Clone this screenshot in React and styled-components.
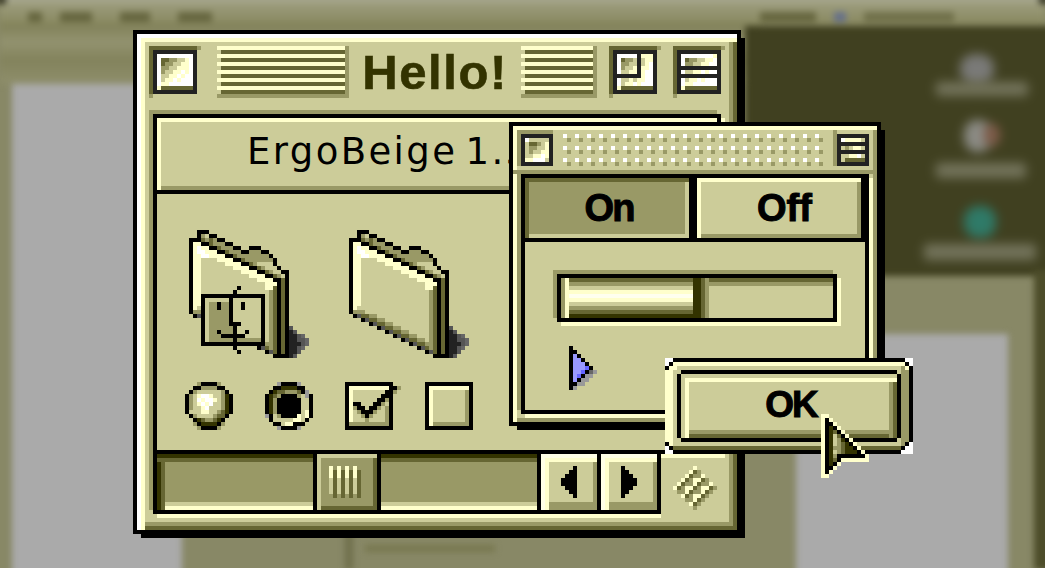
import React from 'react'
import styled, { createGlobalStyle } from 'styled-components'

const beige = '#cccc99'
const cream = '#ffffcc'
const mid = '#999966'
const dark = '#666633'
const deep = '#333300'

const colors = {
  k: '#000000', C: '#222222', K: '#222222', G: '#555555', H: '#666666', g: '#999999',
  w: '#ffffff', c: cream, b: beige, m: mid, d: dark, D: deep, p: '#9999ff', P: '#6666ff',
}

const GlobalStyle = createGlobalStyle`
    html, body {
        margin: 0;
        width: 1045px;
        height: 568px;
        overflow: hidden;
        background: #888866;
    }
`

const PixelSvg = styled.svg`
    display: block;
    flex-shrink: 0;
`

// draws rows of palette letters as 4px blocks, '.' is see through
const Pixels = ({ rows }) => {
  const w = Math.max(...rows.map(r => r.length))
  const rects = []
  rows.forEach((row, y) => {
    let x = 0
    while (x < row.length) {
      let end = x
      while (end < row.length && row[end] === row[x]) end++
      if (row[x] !== '.') {
        rects.push(<rect key={y + '-' + x} x={x} y={y} width={end - x} height={1} fill={colors[row[x]]} />)
      }
      x = end
    }
  })
  return (
    <PixelSvg width={w * 4} height={rows.length * 4} viewBox={`0 0 ${w} ${rows.length}`} shapeRendering="crispEdges">
      {rects}
    </PixelSvg>
  )
}

const makeFolder = (withFace) => {
  const g = Array.from({ length: 32 }, () => Array(30).fill('.'))
  const put = (r, from, to, ch) => { for (let i = from; i <= to; i++) g[r][i] = ch }

  put(0, 2, 4, 'k')
  put(1, 2, 2, 'k'); put(1, 3, 3, 'm'); put(1, 4, 4, 'b'); put(1, 5, 6, 'k')
  put(2, 0, 2, 'k'); put(2, 3, 3, 'd'); put(2, 4, 4, 'm'); put(2, 5, 5, 'd'); put(2, 6, 6, 'm'); put(2, 7, 8, 'k')

  // top slope: cream band, black line, then the back of the folder
  const ends = { 3: 10, 4: 12, 5: 19, 6: 20, 7: 21, 8: 21, 9: 22, 10: 24, 11: 24, 12: 24 }
  for (let r = 3; r <= 12; r++) {
    const ks = 3 + 2 * (r - 3)
    put(r, 0, 0, 'k')
    put(r, 1, ks - 1, 'b')
    put(r, 1, 2, 'c')
    put(r, Math.max(1, ks - 4), ks - 1, 'c')
    put(r, ks, ks + 1, 'k')
    put(r, ks + 2, ks + 2, 'd')
    put(r, ks + 3, ks + 3, 'm')
    const end = ends[r]
    if (ks + 4 < end) put(r, ks + 4, end - 1, r > 7 ? 'b' : 'm')
    if (r === 10) put(r, 23, 24, 'k')
    else put(r, end, end, 'k')
  }
  put(3, 9, 10, 'k'); put(4, 11, 12, 'k'); put(4, 13, 14, '.'); put(4, 15, 17, 'k')
  put(5, 13, 14, 'k'); put(5, 15, 17, 'm'); put(5, 18, 19, 'k')
  put(6, 20, 20, 'k'); put(7, 21, 21, 'k')
  put(4, 2, 2, 'w'); put(5, 2, 3, 'w'); put(6, 3, 4, 'w')
  put(12, 23, 23, 'd'); put(12, 21, 22, 'k')

  for (let r = 13; r <= 20; r++) {
    put(r, 0, 0, 'k')
    put(r, 1, 19, 'b')
    put(r, 1, r < 19 ? 2 : 1, 'c')
  }
  put(13, 19, 21, 'c')
  put(14, 19, 20, 'c')
  put(20, 1, 3, 'm')
  for (let r = 21; r <= 31; r++) {
    const s = 1 + 2 * (r - 21)
    put(r, s + 2, 19, 'b')
    put(r, s + 4, s + 5, 'm')
    put(r, s + 2, s + 3, 'd')
    put(r, s, s, 'k')
    put(r, s + 1, s + 1, 'G')
  }
  for (let r = 13; r <= 30; r++) {
    if (r > 14 && r !== 30) put(r, 20, 20, 'm')
    if (r > 13) put(r, 21, 21, 'd')
    put(r, 22, 22, 'k'); put(r, 23, 23, 'd'); put(r, 24, 24, 'k')
  }
  put(31, 21, 24, 'k')

  const shadow = { 24: 'G', 25: 'KG', 26: 'KKGH', 27: 'KKGGH', 28: 'KKKGH', 29: 'KKGH', 30: 'KKG', 31: 'KG' }
  Object.keys(shadow).forEach(r => {
    shadow[r].split('').forEach((ch, i) => put(+r, 25 + i, 25 + i, ch))
  })

  if (withFace) {
    for (let r = 17; r <= 27; r++) {
      put(r, 4, 17, 'b')
      if (r > 17) put(r, 5, 10, 'm')
    }
    put(27, 5, 17, 'm')
    put(16, 3, 18, 'k'); put(28, 3, 18, 'k')
    for (let r = 16; r <= 28; r++) { put(r, 3, 3, 'k'); put(r, 18, 18, 'k') }
    put(18, 7, 7, 'k'); put(19, 7, 7, 'k'); put(18, 13, 13, 'k'); put(19, 13, 13, 'k')
    for (let r = 17; r <= 22; r++) put(r, 10, 10, 'k')
    put(23, 10, 12, 'k')
    for (let r = 24; r <= 27; r++) put(r, 11, 11, 'k')
    put(25, 7, 7, 'k'); put(26, 8, 13, 'k'); put(25, 14, 14, 'k')
    put(14, 12, 12, 'k'); put(15, 11, 11, 'k')
    put(29, 11, 11, 'k'); put(30, 12, 12, 'k')
  }
  return g.map(r => r.join(''))
}

const closeBox = [
  'ddddddddddddm', 'dCCCCCCCCCCC.',
  'dCwwwwwwwwwC.', 'dCwddmmbbcwC.', 'dCwdmmbbccwC.', 'dCwmmbbcccwC.', 'dCwmbbccwcwC.',
  'dCwbbccwcwwC.', 'dCwbccwcwwwC.', 'dCwccwwwwwwC.', 'dCcddddddddC.',
  'dCCCCCCCCCCC.', 'm............',
]
const zoomBox = [
  'ddddddddddddm', 'dCCCCCCCCCCC.',
  'dCwwwwwCcccC.', 'dCwdmmbCbccC.', 'dCwmmbbCbcwC.', 'dCwmbbcCccwC.', 'dCwbbccCcwwC.',
  'dCCCCCCCcwwC.', 'dCwbbcbccwwC.', 'dCwbccwcwwwC.', 'dCcddddddddC.',
  'dCCCCCCCCCCC.', 'm............',
]
const menuBox = [
  'ddddddddddddm', 'dCCCCCCCCCCC.',
  'dCwwwwwwwwcC.', 'dCwdmmbbccwC.', 'dCwmmbbccwwC.', 'dCCCCCCCCCCC.', 'dCwbbccwcwwC.',
  'dCCCCCCCCCCC.', 'dCwbccwcwwwC.', 'dCwccwwwwwwC.', 'dCcddddddddC.',
  'dCCCCCCCCCCC.', 'm............',
]
const smallClose = [
  'mmmmmmmmm', 'mCCCCCCCC', 'mCwbbbbbC', 'mCbddmbcC', 'mCbmmbbcC', 'mCbmbbccC', 'mCbbccwcC', 'mCccwwwbC', 'mCCCCCCCC',
]
const smallMenu = [
  'm........', 'mCCCCCCCC', 'mCwccccbC', 'mCCCCCCCC', 'mCbmbccbC', 'mCCCCCCCC', 'mCbbccwbC', 'mCbdddddC', 'mCCCCCCCC',
]
const dots = ['w..', '.m.', '...', 'w..', '.m.', '...', 'w..', '.m.'].map(s => s.repeat(22).slice(0, 65))

const radioOff = [
  '...mkkkkm...', '..kkmmmmkk..', '.kmbbbbbbmk.', 'kmbcwwcbbmDk',
  'kmbwcwwcbmDk', 'kmbcwcwbbmDk', 'kmbbcwbbbmDk', 'kbbbccbbmdDk',
  '.kmbbbbmddk.', '..kDdmmdDk..', '..mkDDDDkm..', '...mkkkkm...',
]
const radioOn = [
  '...gkkkkg...', '..kkDDDDkk..', '.kDddmmmdkg.', 'kDdmkkkkmbgk',
  'kDmkkkkkkbbk', 'kDmkkkkkkbbk', 'kDmkkkkkkbbk', 'kDmkkkkkkbck',
  'gkbmkkkkcbck', '.kbbbbbccbk.', '..kkbcckkk..', '...gkkkkg...',
]
const checked = [
  'kkkkkkkkkkkk..', 'kcccccccccckkm', 'kcbbbbbbbbkkm.', 'kcbbbbbbbkkk..',
  'kcbbbbbbkkmk..', 'kckkbbbkkmbk..', 'kcmkkbkkmbmk..', 'kcbmkkkmbbmk..',
  'kcbbmkmbbbmk..', 'kcbbbmbbbbmk..', 'kmmmmmmmmmmk..', 'kkkkkkkkkkkk..',
]
const thumbGrip = ['c.c.c.c.', 'cdcdcdcd', 'cdcdcdcd', 'bdbdbdbd', 'bdbdbdbd', 'bdbdbdbd', 'bdbdbdbd', '.d.d.d.d']
const arrowLeft = ['...k', '..kk', '.kkk', 'kkkk', 'kkkk', '.kkk', '..kk', '...k']
const arrowRight = ['k...', 'kk..', 'kkk.', 'kkkk', 'kkkk', 'kkk.', 'kk..', 'k...']
const playArrow = [
  'k......', 'kk.....', 'kpk....', 'kppk...', 'kpppk..', 'kpppPk.',
  'kppPkHg', 'kpPkgg.', 'kpkgg..', 'kkgg...', 'kg.....',
]
const cursor = [
  'cc..........', 'ckc.........', 'ckkc........', 'ckDkc.......',
  'ckDdkc......', 'ckDbdkc.....', 'ckDbmDkc....', 'ckDbmdDkc...',
  'ckDmmdDDkc..', 'ckDbmdDDDkc.', 'ckDmkkkkkkkc', 'ckDdkccccccc',
  'ckDkc.......', 'ckkc........', 'ckc.........', 'cc..........',
]
const grip = Array.from({ length: 11 }, (_, y) => {
  let s = ''
  for (let x = 0; x < 11; x++) {
    const inside = Math.abs(x - 5) + Math.abs(y - 5) <= 5
    if (!inside) s += '.'
    else if ((x + y) % 4 < 2) s += (x - y + 20) % 4 === 0 ? 'm' : 'c'
    else s += (x - y + 20) % 2 === 0 ? 'd' : 'm'
  }
  return s
})
const okTL = ['wwk', 'wkc', 'kcc']
const okTR = ['kww', 'ckw', 'mck']
const okBL = ['kcb', 'wkd', 'wwk']
const okBR = ['mkw', 'kww', 'www']

const Desk = styled.div`
    position: relative;
    width: 1045px;
    height: 568px;
    overflow: hidden;
    background: #888866;
`

const BlurLayer = styled.div`
    position: absolute;
    inset: 0;
    filter: blur(3px);
`

const MenuStrip = styled.div`
    position: absolute;
    left: 0;
    top: -4px;
    width: 1045px;
    height: 28px;
    background: linear-gradient(#b0b0a0 0, #9c9c7c 8px, #88885f 100%);
    display: flex;
    align-items: center;
    gap: 18px;
    padding-left: 28px;
    box-sizing: border-box;
`

const MenuBlob = styled.div`
    width: ${p => p.$w}px;
    height: 10px;
    margin-top: 14px;
    margin-left: ${p => p.$gap || 0}px;
    background: ${p => p.$color || '#66663f'};
`

const Band = styled.div`
    position: absolute;
    left: 0;
    top: 24px;
    width: 760px;
    height: 60px;
    background: linear-gradient(#808058, #939370 30%, #83835c 60%, #8f8f6c);
`

const BackWindow = styled.div`
    position: absolute;
    left: ${p => p.$x}px;
    top: ${p => p.$y}px;
    width: ${p => p.$w}px;
    height: ${p => p.$h}px;
    background: ${p => p.$color};
`

const DeskBlob = styled.div`
    position: absolute;
    left: ${p => p.$x}px;
    top: ${p => p.$y}px;
    width: ${p => p.$w}px;
    height: ${p => p.$h}px;
    background: ${p => p.$color};
    border-radius: ${p => p.$round ? '45%' : '2px'};
    filter: blur(4px);
`

const Window = styled.div`
    position: absolute;
    left: ${p => p.$x}px;
    top: ${p => p.$y}px;
    width: ${p => p.$w}px;
    height: ${p => p.$h}px;
    box-sizing: border-box;
    display: flex;
    flex-direction: column;
    background: ${beige};
    border: 4px solid #000;
    box-shadow: 6px 6px 0 -2px #000, ${p => p.$inset};
`

const TitleBar = styled.div`
    display: flex;
    align-items: flex-start;
    height: 76px;
    box-sizing: border-box;
    padding: 12px 12px 0 12px;
`

const Stripes = styled.div`
    width: ${p => p.$w}px;
    height: 52px;
    flex-shrink: 0;
    margin-left: ${p => p.$left}px;
    background:
        linear-gradient(${mid}, ${mid}) 0 48px / 100% 4px no-repeat,
        linear-gradient(${mid}, ${mid}) right top / 4px 100% no-repeat,
        repeating-linear-gradient(transparent 0 4px, ${dark} 4px 8px) 4px 0 / 100% 100% no-repeat,
        repeating-linear-gradient(${cream} 0 4px, transparent 4px 8px);
`

const Title = styled.div`
    width: 172px;
    height: 52px;
    flex-shrink: 0;
    display: flex;
    align-items: center;
    justify-content: center;
    font-family: "Liberation Sans", Arial, sans-serif;
    font-weight: 700;
    font-size: 49px;
    letter-spacing: 1.6px;
    color: ${deep};
    -webkit-text-stroke: 0.6px ${deep};
`

const ButtonSlot = styled.div`
    margin-left: ${p => p.$left}px;
    flex-shrink: 0;
`

const Frame = styled.div`
    position: relative;
    flex: 1;
    display: flex;
    flex-direction: column;
    margin: ${p => p.$margin};
    border: 4px solid #000;
    background: ${beige};
    box-shadow: -4px -4px 0 ${mid}, 4px 4px 0 ${cream};
`

const Header = styled.div`
    flex-shrink: 0;
    border-bottom: 4px solid #000;
    padding: 0 0 6px 90px;
    height: 66px;
    display: flex;
    align-items: center;
    white-space: nowrap;
    overflow: hidden;
    font-family: "DejaVu Sans", sans-serif;
    font-size: 37px;
    letter-spacing: 2.4px;
    word-spacing: -6px;
    color: #000;
    box-shadow: inset 4px 4px 0 ${cream}, inset 0 -4px 0 ${mid};
`

const Content = styled.div`
    height: 256px;
    flex-shrink: 0;
    box-sizing: border-box;
    padding: 36px 0 0 28px;
`

const FolderRow = styled.div`
    display: flex;
    gap: 40px;
    padding-left: 4px;
`

const ControlRow = styled.div`
    display: flex;
    gap: 32px;
    margin-top: 24px;
`

const ControlSlot = styled.div`
    width: 48px;
    flex-shrink: 0;
`

const Check = styled.div`
    width: 48px;
    height: 48px;
    box-sizing: border-box;
    border: 4px solid #000;
    background: ${beige};
    box-shadow: inset 4px 4px 0 ${cream}, inset -4px -4px 0 ${mid};
`

const ScrollBar = styled.div`
    display: flex;
    gap: 4px;
    height: 56px;
    background: #000;
    border-top: 4px solid #000;
`

const Track = styled.div`
    width: 156px;
    background: ${mid};
    box-shadow:
        inset 0 4px 0 ${deep},
        inset 0 8px 0 ${dark},
        ${p => p.$first ? `inset 4px 0 0 ${deep}, inset 8px 0 0 ${dark},` : ''}
        inset 0 -4px 0 ${cream},
        inset 0 -8px 0 ${beige};
`

const Thumb = styled.div`
    width: 60px;
    box-sizing: border-box;
    padding: 12px;
    background: ${mid};
    box-shadow:
        inset 4px 4px 0 ${beige},
        inset -4px -4px 0 ${dark};
`

const ArrowButton = styled.div`
    width: 56px;
    display: flex;
    align-items: center;
    justify-content: center;
    background: ${beige};
    box-shadow:
        inset 4px 4px 0 #ffffe6,
        inset 8px 8px 0 ${cream},
        inset -4px -8px 0 ${mid};
`

const CornerSlot = styled.div`
    position: relative;
    width: 56px;
`

const ResizeBox = styled.div`
    position: absolute;
    left: 0;
    top: 0;
    width: 64px;
    height: 64px;
    box-sizing: border-box;
    padding: 12px;
    background: ${beige};
    box-shadow: inset 0 4px 0 ${cream};
`

const PaletteBar = styled.div`
    display: flex;
    justify-content: space-between;
    align-items: flex-start;
    height: 48px;
    flex-shrink: 0;
    box-sizing: border-box;
    padding: 4px 8px 0 4px;
    box-shadow: inset 0 -4px 0 ${mid};
`

const Dots = styled.div`
    padding-top: 4px;
`

const TabRow = styled.div`
    display: flex;
    gap: 8px;
    background: #000;
    padding-right: 4px;
    border-bottom: 4px solid #000;
`

const Tab = styled.div`
    width: 164px;
    height: 60px;
    box-sizing: border-box;
    padding-left: ${p => p.$active ? 4 : 11}px;
    display: flex;
    align-items: center;
    justify-content: center;
    font-family: "Liberation Sans", Arial, sans-serif;
    font-weight: 700;
    font-size: 38px;
    letter-spacing: ${p => p.$active ? -2 : 0}px;
    color: #000;
    -webkit-text-stroke: 1px #000;
    background: ${p => p.$active ? mid : beige};
    box-shadow: ${p => p.$active
      ? `inset 4px 4px 0 ${dark}, inset -4px -4px 0 ${beige}`
      : `inset 4px 4px 0 ${cream}, inset -4px -4px 0 ${mid}`};
`

const PaletteBody = styled.div`
    padding: 32px 0 0 32px;
`

const Well = styled.div`
    width: 272px;
    height: 40px;
    display: flex;
    border: 4px solid #000;
    background: ${beige};
    box-shadow: -4px -4px 0 ${mid}, 4px 4px 0 ${cream};
`

const WellFill = styled.div`
    width: ${p => p.$value}px;
    box-sizing: border-box;
    border-right: 8px solid;
    border-image: linear-gradient(${dark} 0 4px, ${deep} 4px) 8;
    background: linear-gradient(
        ${dark} 0 4px, ${mid} 4px 8px, ${beige} 8px 12px, ${cream} 12px 16px,
        #ffffee 16px 20px, ${cream} 20px 24px, ${beige} 24px 28px, ${mid} 28px 32px,
        ${dark} 32px 36px, ${deep} 36px 40px
    );
    box-shadow: inset 4px 0 0 ${mid}, inset 8px 0 0 ${cream};
`

const WellRest = styled.div`
    flex: 1;
    box-shadow:
        inset 4px 0 0 ${dark},
        inset 8px 0 0 ${mid},
        inset 0 4px 0 ${dark},
        inset 0 8px 0 ${mid};
`

const PlaySlot = styled.div`
    margin: 24px 0 0 12px;
`

const OkOuter = styled.div`
    position: absolute;
    left: 665px;
    top: 358px;
    width: 248px;
    height: 96px;
    box-sizing: border-box;
    padding: 8px 8px 8px 12px;
    background: ${beige};
    border-top: 4px solid #000;
    border-right: 4px solid #000;
    border-bottom: 4px solid #000;
    box-shadow:
        inset 0 4px 0 ${cream},
        inset 8px 0 0 ${cream},
        inset -8px 0 0 ${mid},
        inset 0 -4px 0 ${dark};
`

const OkFace = styled.div`
    position: relative;
    width: 224px;
    height: 72px;
    box-sizing: border-box;
    display: flex;
    align-items: center;
    justify-content: center;
    padding: 0 0 2px 4px;
    border: 4px solid #000;
    background: ${beige};
    font-family: "Liberation Sans", Arial, sans-serif;
    font-weight: 700;
    font-size: 37px;
    letter-spacing: -2px;
    color: #000;
    -webkit-text-stroke: 1px #000;
    box-shadow:
        inset 0 4px 0 ${beige},
        inset 4px 0 0 ${beige},
        inset 0 8px 0 ${cream},
        inset 8px 0 0 ${cream},
        inset -4px 0 0 ${dark},
        inset -8px 0 0 ${mid},
        inset 0 -4px 0 ${dark},
        inset 0 -8px 0 ${mid};
`

const OkCorner = styled.div`
    position: absolute;
    ${p => p.$y}: -4px;
    ${p => p.$x}: ${p => p.$x === 'left' ? 0 : -4}px;
`

const Notch = styled.div`
    position: absolute;
    ${p => p.$y}: -4px;
    ${p => p.$x}: -4px;
    width: 4px;
    height: 4px;
    background: ${beige};
`

const Cursor = styled.div`
    position: absolute;
    left: 821px;
    top: 414px;
`

const mainInset = `inset 4px 4px 0 #fff, inset 8px 8px 0 ${cream}, inset -4px -4px 0 ${dark}, inset -8px -8px 0 ${mid}`
const paletteInset = `inset 4px 4px 0 ${cream}, inset -4px -4px 0 ${mid}`

export default function App() {
  return (
    <Desk>
      <GlobalStyle />
      <BlurLayer>
        <Band />
        <MenuStrip>
          <MenuBlob $w={14} />
          <MenuBlob $w={32} />
          <MenuBlob $w={30} $gap={10} />
          <MenuBlob $w={34} $gap={10} />
          <MenuBlob $w={56} $gap={530} />
          <MenuBlob $w={12} $color="#66708a" />
          <MenuBlob $w={90} $color="#70704a" />
        </MenuStrip>
        <BackWindow $x={12} $y={84} $w={170} $h={500} $color="#aaaaaa" />
        <BackWindow $x={745} $y={26} $w={310} $h={250} $color="#404020" />
        <BackWindow $x={796} $y={334} $w={212} $h={250} $color="#aaaaaa" />
        <BackWindow $x={1034} $y={270} $w={20} $h={300} $color="#4d4d2a" />
        <BackWindow $x={345} $y={530} $w={8} $h={40} $color="#6f6f4c" />
        <BackWindow $x={365} $y={545} $w={130} $h={7} $color="#77774f" />
        <BackWindow $x={-4} $y={-4} $w={10} $h={8} $color="#333322" />
        <BackWindow $x={1039} $y={-4} $w={10} $h={8} $color="#333322" />
        <DeskBlob $x={960} $y={54} $w={34} $h={30} $color="#7a7a78" $round />
        <DeskBlob $x={936} $y={82} $w={92} $h={14} $color="#74745c" />
        <DeskBlob $x={964} $y={120} $w={28} $h={32} $color="#8c8c86" $round />
        <DeskBlob $x={984} $y={124} $w={16} $h={22} $color="#7f5a48" $round />
        <DeskBlob $x={936} $y={163} $w={90} $h={15} $color="#74745c" />
        <DeskBlob $x={964} $y={206} $w={32} $h={32} $color="#2f7a68" $round />
        <DeskBlob $x={924} $y={244} $w={112} $h={16} $color="#74745c" />
      </BlurLayer>

      <Window $x={133} $y={30} $w={608} $h={504} $inset={mainInset}>
        <TitleBar>
          <Pixels rows={closeBox} />
          <Stripes $w={132} $left={16} />
          <Title>Hello!</Title>
          <Stripes $w={76} $left={0} />
          <ButtonSlot $left={12}><Pixels rows={zoomBox} /></ButtonSlot>
          <ButtonSlot $left={12}><Pixels rows={menuBox} /></ButtonSlot>
        </TitleBar>
        <Frame $margin="4px 16px 16px 16px">
          <Header>ErgoBeige 1.5</Header>
          <Content>
            <FolderRow>
              <Pixels rows={makeFolder(true)} />
              <Pixels rows={makeFolder(false)} />
            </FolderRow>
            <ControlRow>
              <ControlSlot><Pixels rows={radioOff} /></ControlSlot>
              <ControlSlot><Pixels rows={radioOn} /></ControlSlot>
              <ControlSlot><Pixels rows={checked} /></ControlSlot>
              <Check />
            </ControlRow>
          </Content>
          <ScrollBar>
            <Track $first />
            <Thumb><Pixels rows={thumbGrip} /></Thumb>
            <Track />
            <ArrowButton><Pixels rows={arrowLeft} /></ArrowButton>
            <ArrowButton><Pixels rows={arrowRight} /></ArrowButton>
            <CornerSlot>
              <ResizeBox><Pixels rows={grip} /></ResizeBox>
            </CornerSlot>
          </ScrollBar>
        </Frame>
      </Window>

      <Window $x={509} $y={122} $w={372} $h={304} $inset={paletteInset}>
        <PaletteBar>
          <Pixels rows={smallClose} />
          <Dots><Pixels rows={dots} /></Dots>
          <Pixels rows={smallMenu} />
        </PaletteBar>
        <Frame $margin="0 8px 8px 8px">
          <TabRow>
            <Tab $active>On</Tab>
            <Tab>Off</Tab>
          </TabRow>
          <PaletteBody>
            <Well>
              <WellFill $value={140} />
              <WellRest />
            </Well>
            <PlaySlot><Pixels rows={playArrow} /></PlaySlot>
          </PaletteBody>
        </Frame>
      </Window>

      <OkOuter>
        <OkFace>
          OK
          <Notch $x="left" $y="top" />
          <Notch $x="right" $y="top" />
          <Notch $x="left" $y="bottom" />
          <Notch $x="right" $y="bottom" />
        </OkFace>
        <OkCorner $x="left" $y="top"><Pixels rows={okTL} /></OkCorner>
        <OkCorner $x="right" $y="top"><Pixels rows={okTR} /></OkCorner>
        <OkCorner $x="left" $y="bottom"><Pixels rows={okBL} /></OkCorner>
        <OkCorner $x="right" $y="bottom"><Pixels rows={okBR} /></OkCorner>
      </OkOuter>
      <Cursor><Pixels rows={cursor} /></Cursor>
    </Desk>
  )
}
